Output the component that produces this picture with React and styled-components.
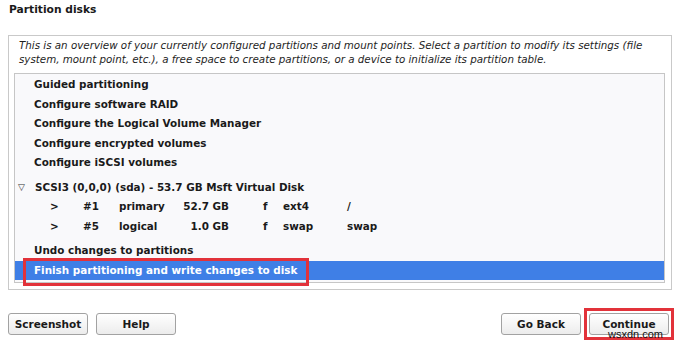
import React from 'react';
import styled, { createGlobalStyle } from 'styled-components';

const GlobalStyle = createGlobalStyle`
  html, body {
    margin: 0;
    padding: 0;
    background: #ffffff;
  }
  body {
    font-family: "DejaVu Sans", "Liberation Sans", sans-serif;
    color: #1a1a1a;
  }
`;

const partitions = [
  { num: '#1', type: 'primary', size: '52.7 GB', fmt: 'f', fs: 'ext4', mount: '/' },
  { num: '#5', type: 'logical', size: '1.0 GB', fmt: 'f', fs: 'swap', mount: 'swap' },
];

function App() {
  return (
    <>
      <GlobalStyle />
      <Page>
        <Title>Partition disks</Title>
        <Frame>
          <Intro>
            This is an overview of your currently configured partitions and mount points. Select a partition to modify its settings (file
            <br />
            system, mount point, etc.), a free space to create partitions, or a device to initialize its partition table.
          </Intro>
          <List>
            <Row>Guided partitioning</Row>
            <Row>Configure software RAID</Row>
            <Row>Configure the Logical Volume Manager</Row>
            <Row>Configure encrypted volumes</Row>
            <Row>Configure iSCSI volumes</Row>
            <Spacer />
            <DiskRow>
              <Toggle>▽</Toggle>
              SCSI3 (0,0,0) (sda) - 53.7 GB Msft Virtual Disk
            </DiskRow>
            {partitions.map((p) => (
              <PartRow key={p.num}>
                <span>&gt;</span>
                <span>{p.num}</span>
                <span>{p.type}</span>
                <Size>{p.size}</Size>
                <span />
                <span>{p.fmt}</span>
                <span>{p.fs}</span>
                <span>{p.mount}</span>
              </PartRow>
            ))}
            <Spacer />
            <Row>Undo changes to partitions</Row>
            <Row selected>
              Finish partitioning and write changes to disk
              <Mark />
            </Row>
          </List>
        </Frame>
        <Footer>
          <Group>
            <Button>Screenshot</Button>
            <Button>Help</Button>
          </Group>
          <Group>
            <Button>Go Back</Button>
            <Marked>
              <Button>Continue</Button>
              <Watermark>wsxdn.com</Watermark>
            </Marked>
          </Group>
        </Footer>
      </Page>
    </>
  );
}

const Page = styled.div`
  width: 679px;
  height: 343px;
  box-sizing: border-box;
  padding: 3px 8px 0 8px;
  display: flex;
  flex-direction: column;
`;

const Title = styled.div`
  font-size: 10.7px;
  font-weight: bold;
  line-height: 14px;
  padding-left: 1px;
  margin-bottom: 18px;
`;

const Frame = styled.div`
  width: 664px;
  height: 255px;
  box-sizing: border-box;
  border: 1px solid #c9c9c9;
  padding: 0 6px 6px 5px;
  display: flex;
  flex-direction: column;
`;

const Intro = styled.div`
  font-size: 10.3px;
  font-style: italic;
  line-height: 14px;
  padding: 2px 0 0 5px;
  height: 35px;
  color: #1e1e1e;
  white-space: nowrap;
`;

const List = styled.div`
  flex: 1;
  border: 1px solid #c6c6c6;
  background: #f9f9fb;
  padding-top: 1px;
  position: relative;
`;

const Row = styled.div`
  position: relative;
  height: 19.5px;
  line-height: 19.5px;
  font-size: 10.4px;
  font-weight: bold;
  padding-left: 19px;
  white-space: nowrap;
  color: ${(p) => (p.selected ? '#ffffff' : '#1a1a1a')};
  background: ${(p) => (p.selected ? '#3f7fe6' : 'transparent')};
`;

const Spacer = styled.div`
  height: 5px;
`;

const DiskRow = styled(Row)`
  padding-left: 2px;
  display: flex;
  align-items: center;
`;

const Toggle = styled.span`
  width: 17px;
  font-size: 9px;
  font-weight: normal;
  color: #333;
  padding-left: 1px;
`;

const PartRow = styled(Row)`
  padding-left: 35px;
  display: grid;
  grid-template-columns: 33px 36px 60px 50px 34px 20px 64px 40px;
`;

const Size = styled.span`
  text-align: right;
`;

const Mark = styled.div`
  position: absolute;
  left: 8px;
  top: -3px;
  width: 280px;
  height: 22px;
  border: 3px solid #e2323a;
`;

const Footer = styled.div`
  display: flex;
  justify-content: space-between;
  align-items: center;
  margin-top: 18px;
`;

const Group = styled.div`
  display: flex;
  align-items: center;
  gap: 8px;
`;

const Button = styled.button`
  width: 80px;
  height: 22px;
  box-sizing: border-box;
  border: 1px solid #a2a2a2;
  border-radius: 3px;
  background: linear-gradient(#ffffff, #ececec);
  font-family: "DejaVu Sans", "Liberation Sans", sans-serif;
  font-size: 10.5px;
  font-weight: bold;
  color: #1a1a1a;
  padding: 0;
`;

const Marked = styled.div`
  position: relative;
  padding: 2px;
  margin-left: -5px;
  margin-right: -3px;
  border: 3px solid #e2323a;
  line-height: 0;
`;

const Watermark = styled.span`
  position: absolute;
  right: 8px;
  bottom: -3px;
  font-family: "Liberation Sans", sans-serif;
  font-size: 11px;
  line-height: 12px;
  color: #111;
`;

export default App;
